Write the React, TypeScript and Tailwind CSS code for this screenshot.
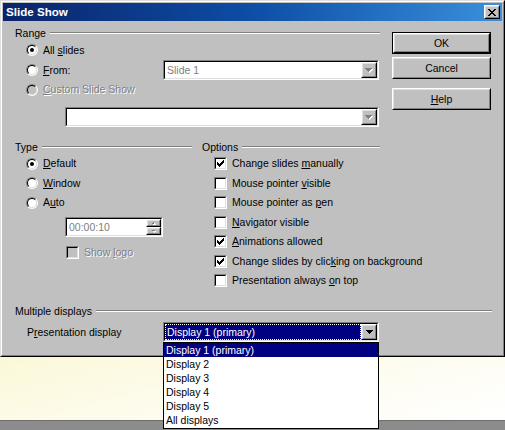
import React from "react";

type P = { className?: string; innerClassName?: string; children?: React.ReactNode };

function Raised({ className = "", innerClassName = "", children }: P) {
  return (
    <div className={`border border-t-white border-l-white border-r-black border-b-black ${className}`}>
      <div
        className={`w-full h-full border border-t-[#dfdfdf] border-l-[#dfdfdf] border-r-[#808080] border-b-[#808080] bg-[#c0c0c0] ${innerClassName}`}
      >
        {children}
      </div>
    </div>
  );
}

function Sunken({ className = "", innerClassName = "", children }: P) {
  return (
    <div className={`border border-t-[#808080] border-l-[#808080] border-r-white border-b-white ${className}`}>
      <div
        className={`w-full h-full border border-t-black border-l-black border-r-[#dfdfdf] border-b-[#dfdfdf] ${innerClassName}`}
      >
        {children}
      </div>
    </div>
  );
}

function DownArrow({ disabled }: { disabled?: boolean }) {
  if (disabled) {
    return (
      <svg width="8" height="5" viewBox="0 0 8 5" shapeRendering="crispEdges">
        <path d="M1 1h7v1h-7z M2 2h5v1h-5z M3 3h3v1h-3z M4 4h1v1h-1z" fill="#ffffff" />
        <path d="M0 0h7v1h-7z M1 1h5v1h-5z M2 2h3v1h-3z M3 3h1v1h-1z" fill="#808080" />
      </svg>
    );
  }
  return (
    <svg width="7" height="4" viewBox="0 0 7 4" shapeRendering="crispEdges">
      <path d="M0 0h7v1h-7z M1 1h5v1h-5z M2 2h3v1h-3z M3 3h1v1h-1z" fill="#000000" />
    </svg>
  );
}

function SmallArrow({ up }: { up?: boolean }) {
  return (
    <svg width="6" height="4" viewBox="0 0 6 4" shapeRendering="crispEdges">
      {up ? (
        <>
          <path d="M2 1h1v1h-1z M1 2h3v1h-3z" fill="#808080" />
          <path d="M3 2h1v1h-1z M2 3h3v1h-3z" fill="#ffffff" />
        </>
      ) : (
        <>
          <path d="M1 1h3v1h-3z M2 2h1v1h-1z" fill="#808080" />
          <path d="M2 2h3v1h-3z M3 3h1v1h-1z" fill="#ffffff" opacity="0.9" />
        </>
      )}
    </svg>
  );
}

function Radio({ checked, disabled }: { checked?: boolean; disabled?: boolean }) {
  return (
    <div className="w-[12px] h-[12px] shrink-0 rounded-full border border-t-[#808080] border-l-[#808080] border-b-white border-r-white">
      <div
        className={`w-full h-full rounded-full border border-t-black border-l-black border-b-[#dfdfdf] border-r-[#dfdfdf] flex items-center justify-center ${
          disabled ? "bg-[#c0c0c0]" : "bg-white"
        }`}
      >
        {checked && <div className="w-[4px] h-[4px] rounded-full bg-black" />}
      </div>
    </div>
  );
}

function Check({ checked, disabled }: { checked?: boolean; disabled?: boolean }) {
  return (
    <div className="w-[13px] h-[13px] shrink-0 border border-t-[#808080] border-l-[#808080] border-b-white border-r-white">
      <div
        className={`w-full h-full border border-t-black border-l-black border-b-[#dfdfdf] border-r-[#dfdfdf] flex items-center justify-center ${
          disabled ? "bg-[#c0c0c0]" : "bg-white"
        }`}
      >
        {checked && (
          <svg width="7" height="7" viewBox="0 0 7 7" shapeRendering="crispEdges">
            <path
              d="M6 0h1v1h-1z M5 1h2v1h-2z M0 2h1v1h-1z M4 2h3v1h-3z M0 3h2v1h-2z M3 3h3v1h-3z M0 4h5v1h-5z M1 5h3v1h-3z M2 6h1v1h-1z"
              fill="#000000"
            />
          </svg>
        )}
      </div>
    </div>
  );
}

const DIS = "text-[#808080] [text-shadow:1px_1px_0_#ffffff]";

function Header({ children }: { children: React.ReactNode }) {
  return (
    <div className="flex items-center h-[14px]">
      <span className="whitespace-nowrap">{children}</span>
      <div className="flex-1 ml-[4px] h-[2px] border-t border-t-[#808080] border-b border-b-white" />
    </div>
  );
}

function U({ children }: { children: React.ReactNode }) {
  return <span className="underline underline-offset-[1px]">{children}</span>;
}

function RadioRow({
  h,
  checked,
  disabled,
  children,
}: {
  h: string;
  checked?: boolean;
  disabled?: boolean;
  children: React.ReactNode;
}) {
  return (
    <div className={`flex items-center pl-[11px] gap-[5px] ${h}`}>
      <Radio checked={checked} disabled={disabled} />
      <span className={`whitespace-nowrap ${disabled ? DIS : ""}`}>{children}</span>
    </div>
  );
}

function CheckRow({ checked, children }: { checked?: boolean; children: React.ReactNode }) {
  return (
    <div className="flex items-center pl-[12px] gap-[5px] h-[19.5px]">
      <Check checked={checked} />
      <span className="whitespace-nowrap">{children}</span>
    </div>
  );
}

function Combo({ className, text }: { className: string; text?: string }) {
  return (
    <Sunken className={`h-[20px] ${className}`} innerClassName="flex bg-white">
      <div className={`flex-1 flex items-center pl-[2px] ${DIS.split(" ")[0]}`}>{text}</div>
      <Raised className="w-[16px] h-full" innerClassName="flex items-center justify-center">
        <DownArrow disabled />
      </Raised>
    </Sunken>
  );
}

function Button({ children, def }: { children: React.ReactNode; def?: boolean }) {
  const inner = (
    <Raised className="w-full h-full" innerClassName="flex items-center justify-center">
      <span>{children}</span>
    </Raised>
  );
  return def ? (
    <div className="h-[22px] border border-black">{inner}</div>
  ) : (
    <div className="h-[22px]">{inner}</div>
  );
}

export default function App() {
  return (
    <div className="relative w-[505px] h-[430px] overflow-hidden bg-[#8c8c8c] text-black text-[10.5px] leading-[13px] font-['Liberation_Sans',Arial,sans-serif]">
      {/* Dialog */}
      <div className="h-[357px] border border-t-[#dfdfdf] border-l-[#dfdfdf] border-r-black border-b-black">
        <div className="h-full flex flex-col border border-t-white border-l-white border-r-[#808080] border-b-[#808080] bg-[#c0c0c0] p-px">
          {/* Title bar */}
          <div className="h-[18px] shrink-0 flex items-center justify-between pl-[3px] pr-[2px] bg-linear-to-r from-[#0a246a] via-[#0d4ea6] to-[#3a90dc]">
            <span className="text-white font-bold text-[11.6px] leading-[14px]">Slide Show</span>
            <Raised className="w-[16px] h-[14px]" innerClassName="flex items-center justify-center">
              <svg width="8" height="7" viewBox="0 0 8 7" shapeRendering="crispEdges">
                <path
                  d="M0 0h2v1h-2z M6 0h2v1h-2z M1 1h2v1h-2z M5 1h2v1h-2z M2 2h4v1h-4z M3 3h2v1h-2z M2 4h4v1h-4z M1 5h2v1h-2z M5 5h2v1h-2z M0 6h2v1h-2z M6 6h2v1h-2z"
                  fill="#000000"
                />
              </svg>
            </Raised>
          </div>

          {/* Body */}
          <div className="flex-1 flex flex-col pl-[12px] pr-[10px]">
            <div className="flex">
              {/* Left column */}
              <div className="w-[365px] flex flex-col pt-[5px]">
                <Header>Range</Header>
                <RadioRow h="h-[20px]" checked>
                  All <U>s</U>lides
                </RadioRow>
                <div className="flex h-[20px]">
                  <div className="w-[148px] flex items-center pl-[11px] gap-[5px]">
                    <Radio />
                    <span>
                      <U>F</U>rom:
                    </span>
                  </div>
                  <Combo className="w-[216px]" text="Slide 1" />
                </div>
                <RadioRow h="h-[19px]" disabled>
                  <U>C</U>ustom Slide Show
                </RadioRow>
                <div className="mt-[8px] pl-[50px]">
                  <Combo className="w-[314px]" />
                </div>

                {/* Type & Options */}
                <div className="flex mt-[13px]">
                  <div className="w-[177px] flex flex-col">
                    <Header>Type</Header>
                    <RadioRow h="h-[19.5px]" checked>
                      <U>D</U>efault
                    </RadioRow>
                    <RadioRow h="h-[19.5px]">
                      <U>W</U>indow
                    </RadioRow>
                    <RadioRow h="h-[19.5px]">
                      A<U>u</U>to
                    </RadioRow>
                    <div className="mt-[4.5px] pl-[50px]">
                      <Sunken className="w-[98px] h-[20px]" innerClassName="flex bg-white">
                        <div className="flex-1 flex items-center pl-[2px] text-[#808080]">00:00:10</div>
                        <div className="w-[15px] flex flex-col">
                          <Raised className="h-[8px]" innerClassName="flex items-center justify-center">
                            <SmallArrow up />
                          </Raised>
                          <Raised className="h-[8px]" innerClassName="flex items-center justify-center">
                            <SmallArrow />
                          </Raised>
                        </div>
                      </Sunken>
                    </div>
                    <div className="mt-[5px] h-[20px] flex items-center pl-[51px] gap-[5px]">
                      <Check disabled />
                      <span className={DIS}>
                        Show <U>l</U>ogo
                      </span>
                    </div>
                  </div>
                  <div className="w-[178px] ml-[10px] flex flex-col">
                    <Header>Options</Header>
                    <CheckRow checked>
                      Change slides <U>m</U>anually
                    </CheckRow>
                    <CheckRow>
                      Mouse pointer <U>v</U>isible
                    </CheckRow>
                    <CheckRow>
                      Mouse pointer as <U>p</U>en
                    </CheckRow>
                    <CheckRow>
                      <U>N</U>avigator visible
                    </CheckRow>
                    <CheckRow checked>
                      <U>A</U>nimations allowed
                    </CheckRow>
                    <CheckRow checked>
                      Change slides by clic<U>k</U>ing on background
                    </CheckRow>
                    <CheckRow>
                      Presentation always <U>o</U>n top
                    </CheckRow>
                  </div>
                </div>
              </div>

              {/* Buttons */}
              <div className="w-[99px] ml-[12px] pt-[11px] flex flex-col">
                <Button def>OK</Button>
                <div className="mt-[3px]">
                  <Button>Cancel</Button>
                </div>
                <div className="mt-[9px]">
                  <Button>
                    <U>H</U>elp
                  </Button>
                </div>
              </div>
            </div>

            {/* Multiple displays */}
            <div className="mt-[13.5px]">
              <Header>Multiple displays</Header>
            </div>
            <div className="flex mt-[4px] h-[20px]">
              <div className="w-[148px] flex items-center pl-[12px]">
                P<U>r</U>esentation display
              </div>
              <Sunken className="w-[216px] h-[20px]" innerClassName="flex bg-white">
                <div className="flex-1 bg-[#000080] border border-dotted border-white flex items-center pl-[1px] text-white whitespace-nowrap">
                  Display 1 (primary)
                </div>
                <Raised className="w-[16px] h-full" innerClassName="flex items-center justify-center">
                  <DownArrow />
                </Raised>
              </Sunken>
            </div>
          </div>
        </div>
      </div>

      {/* Background behind dialog */}
      <div className="h-[63px] bg-[linear-gradient(165deg,#fbf8d8_0%,#fdfbea_40%,#ffffff_100%)]" />
      <div className="h-[10px] border-t border-t-[#6e6e6e] bg-[#8c8c8c]" />

      {/* Open dropdown list */}
      <div className="absolute left-[163px] top-[342px] w-[216px] h-[87px] bg-white border border-black flex flex-col">
        {["Display 1 (primary)", "Display 2", "Display 3", "Display 4", "Display 5", "All displays"].map((t, i) => (
          <div
            key={t}
            className={`h-[14px] flex items-center pl-[2px] whitespace-nowrap ${
              i === 0 ? "bg-[#000080] text-white" : "text-black"
            }`}
          >
            {t}
          </div>
        ))}
      </div>
    </div>
  );
}
